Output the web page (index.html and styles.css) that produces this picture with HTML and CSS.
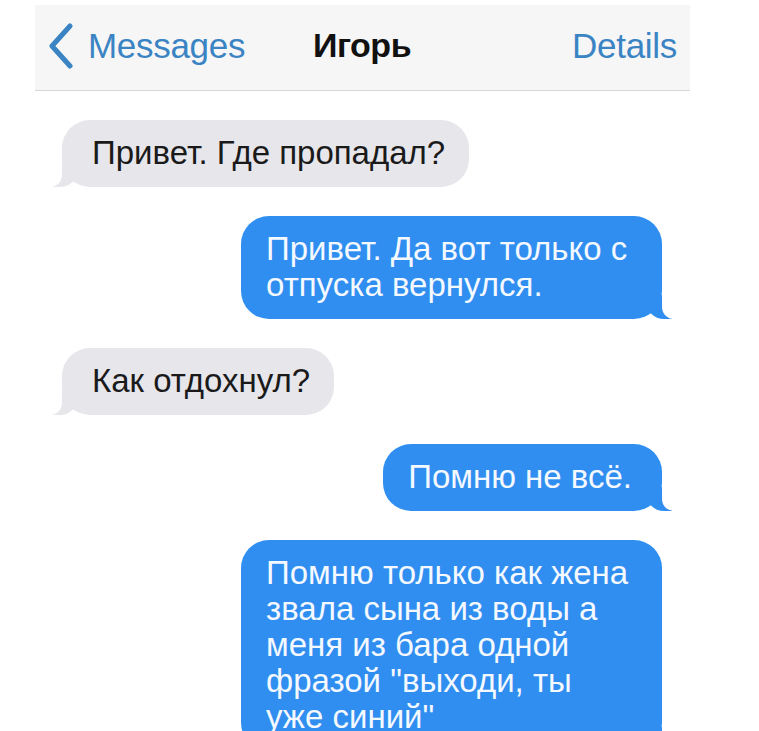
FILE: index.html
```html
<!DOCTYPE html>
<html lang="ru">
<head>
  <meta charset="UTF-8">
  <meta name="viewport" content="width=device-width, initial-scale=1.0">
  <title>Игорь</title>
  <link rel="stylesheet" href="styles.css">
</head>
<body>
  <div class="phone">
    <header class="nav">
      <a class="nav-back" href="#">
        <svg class="chevron" viewBox="0 0 28 46" width="28" height="46">
          <path d="M23 3 L5 23 L23 43" fill="none" stroke="currentColor" stroke-width="5" stroke-linecap="round" stroke-linejoin="round"/>
        </svg>
        <span>Messages</span>
      </a>
      <div class="nav-title">Игорь</div>
      <a class="nav-details" href="#">Details</a>
    </header>

    <div class="thread">
      <div class="bubble in">Привет. Где пропадал?</div>
      <div class="bubble out">Привет. Да вот только с отпуска вернулся.</div>
      <div class="bubble in">Как отдохнул?</div>
      <div class="bubble out">Помню не всё.</div>
      <div class="bubble out">Помню только как жена звала сына из воды а меня из бара одной фразой "выходи, ты уже синий"</div>
    </div>
  </div>
</body>
</html>
```

FILE: styles.css
```css
body {
  margin: 0;
  background: #fff;
  font-family: "Liberation Sans", Arial, sans-serif;
  overflow: hidden;
}
.phone {
  width: 655px;
  margin: 5px 0 0 35px;
}
.nav {
  display: grid;
  grid-template-columns: 1fr auto 1fr;
  align-items: center;
  height: 81px;
  background: #f6f6f6;
  border-bottom: 1px solid #d6d6d6;
  padding: 0 13px 4px 12px;
}
.nav a {
  color: #3b84c4;
  text-decoration: none;
  font-size: 35px;
  letter-spacing: -0.3px;
}
.nav-back {
  display: flex;
  align-items: center;
  gap: 13px;
}
.chevron {
  display: block;
}
.nav-title {
  font-size: 34px;
  font-weight: bold;
  color: #111;
  letter-spacing: -0.5px;
}
.nav-details {
  justify-self: end;
}
.thread {
  display: flex;
  flex-direction: column;
  gap: 29px;
  padding: 29px 28px 0 27px;
}
.bubble {
  position: relative;
  font-size: 33px;
  line-height: 36px;
  padding: 15px 24px 16px 28px;
  border-radius: 28px;
  max-width: 366px;
}
.bubble.in {
  align-self: flex-start;
  background: #e6e6eb;
  color: #1a1a1a;
  padding-left: 30px;
}
.bubble.out {
  align-self: flex-end;
  background: #2f8ef0;
  color: #f4f8ff;
  padding-left: 25px;
  padding-right: 30px;
}
/* bubble tails */
.bubble::before,
.bubble::after {
  content: "";
  position: absolute;
  bottom: 0;
  height: 24px;
}
.bubble.in::before {
  left: -10px;
  width: 26px;
  background: #e6e6eb;
  border-bottom-right-radius: 18px;
}
.bubble.in::after {
  left: -14px;
  width: 14px;
  background: #fff;
  border-bottom-right-radius: 12px;
}
.bubble.out::before {
  right: -10px;
  width: 26px;
  background: #2f8ef0;
  border-bottom-left-radius: 18px;
}
.bubble.out::after {
  right: -14px;
  width: 14px;
  background: #fff;
  border-bottom-left-radius: 12px;
}
```
